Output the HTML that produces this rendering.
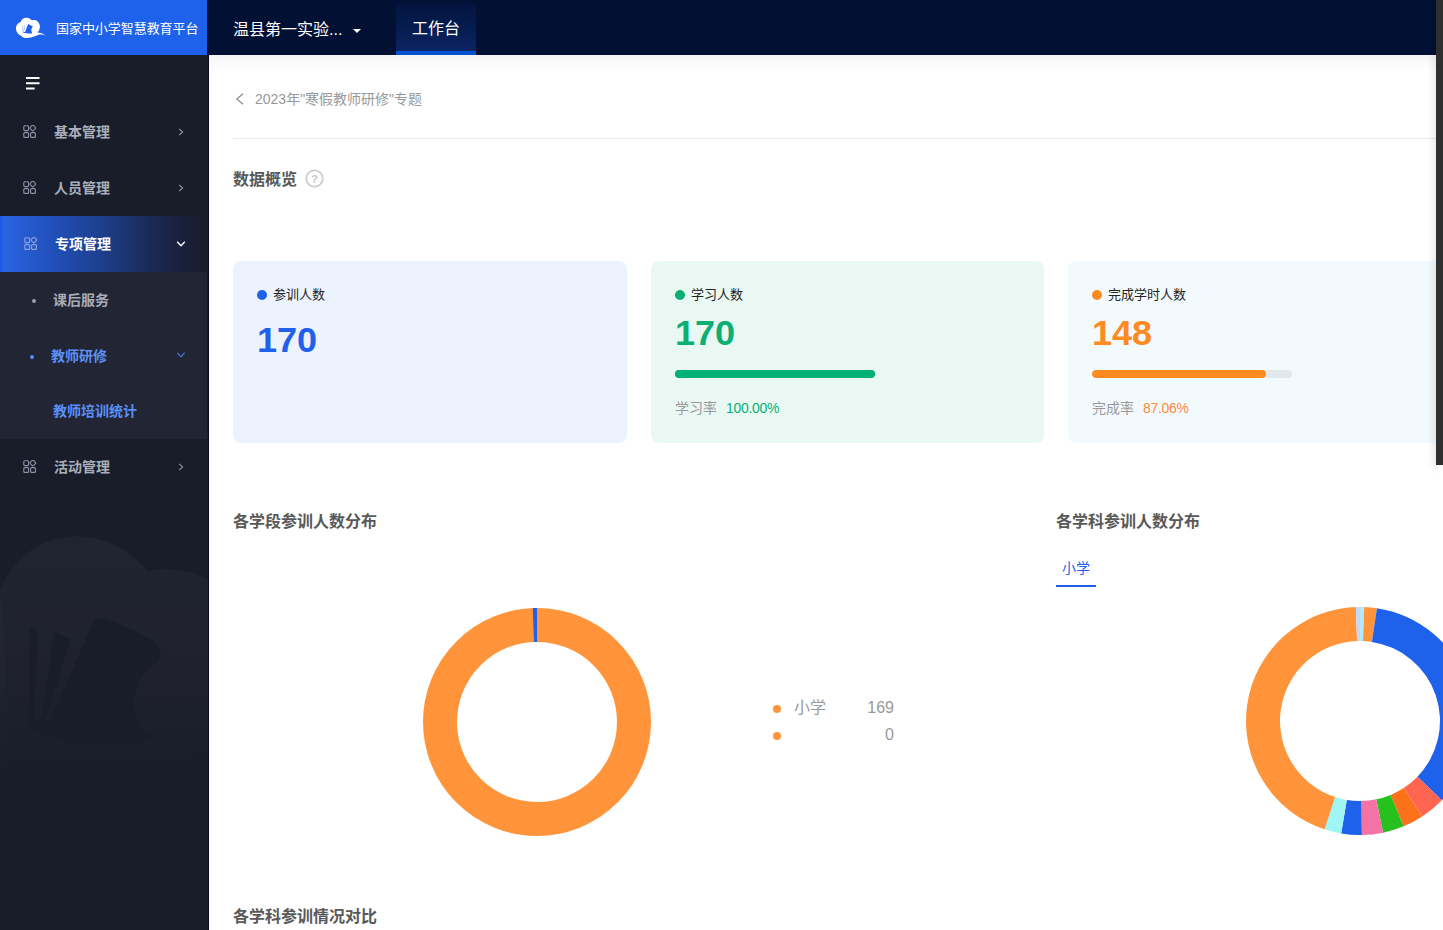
<!DOCTYPE html>
<html lang="zh-CN">
<head>
<meta charset="utf-8">
<title>教师培训统计</title>
<style>
*{box-sizing:border-box;margin:0;padding:0}
html,body{width:1443px;height:930px;overflow:hidden;background:#fff}
body{font-family:"Liberation Sans","Noto Sans CJK SC",sans-serif;color:#333;position:relative}
.abs{position:absolute}
/* header */
#hdr{position:absolute;left:0;top:0;width:1443px;height:55px;background:#021033}
#logo{position:absolute;left:0;top:0;width:207px;height:55px;background:#1e61eb}
#logo .t{position:absolute;left:56px;top:0;line-height:57px;font-size:13px;color:#fff;white-space:nowrap;letter-spacing:-0.05px}
#org{position:absolute;left:233px;top:2px;line-height:56px;font-size:16px;color:#fff;white-space:nowrap}
#caret{position:absolute;left:353px;top:29px;width:0;height:0;border-left:4px solid transparent;border-right:4px solid transparent;border-top:4.5px solid #fff}
#tab{position:absolute;left:396px;top:0;width:80px;height:55px;background:linear-gradient(180deg,#021033 0,#03143c 7%,#0a2463 100%);border-bottom:4px solid #0252cf;text-align:center;line-height:58px;font-size:16px;color:#fff}
/* sidebar */
#side{position:absolute;left:0;top:55px;width:209px;height:875px;background:#191c29;border-right:1px solid #070b1e;overflow:hidden}
.mi{position:absolute;left:0;width:208px;height:56px;line-height:56px;font-size:14px;font-weight:700;color:#a9afbb;white-space:nowrap}
.mi .tx{position:absolute;left:54px;top:0}
.mi svg.ic{position:absolute;left:23px;top:21px}
.mi svg.ch{position:absolute;left:176px;top:23px}
#sel{background:linear-gradient(90deg,#2b65e2 0%,#2252c0 22%,#1d3e8a 50%,#1a2a57 72%,#191f38 90%,#191c29 100%);color:#fff}
#sel:before{content:"";position:absolute;left:0;top:0;width:3px;height:100%;background:#1e5be6}
#sub{position:absolute;left:0;top:217px;width:207px;height:167px;background:#222533}
.si{position:absolute;left:0;width:207px;height:56px;line-height:56px;font-size:14px;font-weight:700;white-space:nowrap}
/* content */
#main{position:absolute;left:209px;top:55px;width:1234px;height:875px;background:#fff;overflow:hidden}
#topsh{position:absolute;left:0;top:0;width:100%;height:16px;background:linear-gradient(180deg,#f4f4f4 0%,#fafafa 45%,#fff 100%)}
.h2{position:absolute;font-size:16px;font-weight:700;color:#595959;white-space:nowrap;line-height:24px}
.card{position:absolute;top:206px;width:394px;height:182px;border-radius:8px}
.card .dot{position:absolute;left:24px;top:29px;width:10px;height:10px;border-radius:50%}
.card .lb{position:absolute;left:40px;top:24px;line-height:20px;font-size:13px;color:#222;white-space:nowrap}
.card .num{position:absolute;left:24px;font-size:34.500px;font-weight:700;line-height:40px;transform:scaleX(1.045);transform-origin:left center;white-space:nowrap}
.card .bar{position:absolute;left:24px;top:109px;width:200px;height:8px;border-radius:4px;background:#e2e9ee;overflow:hidden}
.card .bar i{display:block;height:8px;border-radius:4px}
.card .rt{position:absolute;left:24px;top:137px;line-height:20px;font-size:14px;color:#999;white-space:nowrap}
.card .rt b{font-weight:400;margin-left:9px;letter-spacing:-.3px}
</style>
</head>
<body>
<div id="hdr">
  <div id="logo">
    <svg class="abs" style="left:8px;top:8px" width="60" height="40" viewBox="0 0 1395 930">
      <path d="M185 490C180 410 225 350 292 328C310 262 372 222 435 228C480 232 525 252 556 290C600 270 660 285 700 325C745 370 755 440 730 500C718 535 700 555 680 568C760 570 830 600 882 645C820 615 760 610 700 628C620 655 530 695 430 700C380 702 340 685 312 650C255 630 192 570 185 490Z" fill="#fff"/>
      <path d="M466 372L580 432C545 470 525 520 562 586C490 596 400 588 328 556C350 562 375 562 398 556Z" fill="#1e61eb"/>
      <path d="M336 402L352 400L356 552L338 548Z" fill="#1e61eb" opacity=".4"/>
      <path d="M384 402L400 404L372 560L360 556Z" fill="#1e61eb" opacity=".45"/>
    </svg>
    <div class="t">国家中小学智慧教育平台</div>
  </div>
  <div id="org">温县第一实验...</div>
  <div id="caret"></div>
  <div id="tab">工作台</div>
</div>

<div id="side">
  <svg class="abs" style="left:25.500px;top:21.500px" width="14" height="13" viewBox="0 0 14 13"><path d="M0 1h13.500M0 6.300h13.500M0 11.600h8.700" stroke="#fff" stroke-width="2" fill="none"/></svg>
  <!-- watermark -->
  <svg class="abs" style="left:0;top:465px" width="210" height="280" viewBox="0 0 698 930">
    <defs><linearGradient id="wg" x1="0" y1="0" x2="0" y2="1"><stop offset="0.05" stop-color="#20242f"/><stop offset="0.5" stop-color="#1f222e"/><stop offset="0.95" stop-color="#191c29"/></linearGradient>
    <linearGradient id="wg2" x1="0" y1="0" x2="0" y2="1"><stop offset="0.25" stop-color="#222632"/><stop offset="0.9" stop-color="#1b1e2b"/></linearGradient></defs>
    <path d="M0 235C20 180 60 125 120 90C170 62 230 48 290 56C370 66 440 105 490 170C550 155 630 165 698 200V760C560 840 300 900 0 890Z" fill="url(#wg)"/>
    <path d="M0 240C12 330 18 430 20 540V810L0 805Z" fill="url(#wg2)"/>
    <path d="M318 322C385 340 450 365 500 395C535 415 545 450 520 475C470 510 440 560 446 620C450 665 475 705 520 722C440 750 330 755 230 735C175 722 125 708 95 690L100 355L125 366L112 680L140 655L180 372L235 395L150 668L165 670Z" fill="#191c29"/>
  </svg>
  <div class="mi" style="top:49px"><svg class="ic" width="14" height="14" viewBox="0 0 14 14" fill="none" stroke="#8f95a8" stroke-width="1.100"><rect x=".8" y=".8" width="4.800" height="4.800" rx="1"/><rect x=".8" y="7.600" width="4.800" height="4.800" rx="1"/><rect x="7.600" y="7.600" width="4.800" height="4.800" rx="1"/><rect x="7.600" y=".8" width="4.400" height="4.400" rx=".8" transform="rotate(45 9.800 3)"/></svg><span class="tx">基本管理</span><svg class="ch" width="10" height="10" viewBox="0 0 10 10"><path d="M3.200 1.800L6.600 5 3.200 8.200" stroke="#8f95a8" stroke-width="1.100" fill="none"/></svg></div>
  <div class="mi" style="top:105px"><svg class="ic" width="14" height="14" viewBox="0 0 14 14" fill="none" stroke="#8f95a8" stroke-width="1.100"><rect x=".8" y=".8" width="4.800" height="4.800" rx="1"/><rect x=".8" y="7.600" width="4.800" height="4.800" rx="1"/><rect x="7.600" y="7.600" width="4.800" height="4.800" rx="1"/><rect x="7.600" y=".8" width="4.400" height="4.400" rx=".8" transform="rotate(45 9.800 3)"/></svg><span class="tx">人员管理</span><svg class="ch" width="10" height="10" viewBox="0 0 10 10"><path d="M3.200 1.800L6.600 5 3.200 8.200" stroke="#8f95a8" stroke-width="1.100" fill="none"/></svg></div>
  <div class="mi" id="sel" style="top:161px"><svg class="ic" style="left:24px" width="14" height="14" viewBox="0 0 14 14" fill="none" stroke="#8fa6dd" stroke-width="1.100"><rect x=".8" y=".8" width="4.800" height="4.800" rx="1"/><rect x=".8" y="7.600" width="4.800" height="4.800" rx="1"/><rect x="7.600" y="7.600" width="4.800" height="4.800" rx="1"/><rect x="7.600" y=".8" width="4.400" height="4.400" rx=".8" transform="rotate(45 9.800 3)"/></svg><span class="tx" style="left:55px">专项管理</span><svg class="ch" width="10" height="10" viewBox="0 0 10 10"><path d="M1.200 2.800L5 6.800 8.800 2.800" stroke="#fff" stroke-width="1.300" fill="none"/></svg></div>
  <div id="sub">
    <div class="si" style="top:0;color:#a9adb7"><span class="abs" style="left:32px;top:27px;width:4px;height:4px;border-radius:50%;background:#9a9eb0"></span><span class="abs" style="left:53px">课后服务</span></div>
    <div class="si" style="top:56px;color:#5b8ff9"><span class="abs" style="left:30px;top:27px;width:4px;height:4px;border-radius:50%;background:#5b8ff9"></span><span class="abs" style="left:51px">教师研修</span><svg class="abs" style="left:176px;top:22px" width="10" height="10" viewBox="0 0 10 10"><path d="M1.400 2.800L5 6.800 8.600 2.800" stroke="#4a7de8" stroke-width="1.100" fill="none"/></svg></div>
    <div class="si" style="top:111px;color:#5b8ff9"><span class="abs" style="left:53px">教师培训统计</span></div>
  </div>
  <div class="mi" style="top:384px"><svg class="ic" width="14" height="14" viewBox="0 0 14 14" fill="none" stroke="#8f95a8" stroke-width="1.100"><rect x=".8" y=".8" width="4.800" height="4.800" rx="1"/><rect x=".8" y="7.600" width="4.800" height="4.800" rx="1"/><rect x="7.600" y="7.600" width="4.800" height="4.800" rx="1"/><rect x="7.600" y=".8" width="4.400" height="4.400" rx=".8" transform="rotate(45 9.800 3)"/></svg><span class="tx">活动管理</span><svg class="ch" width="10" height="10" viewBox="0 0 10 10"><path d="M3.200 1.800L6.600 5 3.200 8.200" stroke="#8f95a8" stroke-width="1.100" fill="none"/></svg></div>
</div>

<div id="main">
  <div id="topsh"></div>
  <!-- breadcrumb -->
  <svg class="abs" style="left:26px;top:38px" width="10" height="12" viewBox="0 0 10 12"><path d="M8 .8L1.800 6 8 11.200" stroke="#8a8a8a" stroke-width="1.200" fill="none"/></svg>
  <div class="abs" style="left:46px;top:34px;line-height:20px;font-size:14px;color:#999;white-space:nowrap">2023年"寒假教师研修"专题</div>
  <div class="abs" style="left:24px;top:83px;width:1210px;height:1px;background:#e9e9e9"></div>
  <div class="h2" style="left:24px;top:113px">数据概览</div>
  <svg class="abs" style="left:95.500px;top:113.500px" width="19" height="19" viewBox="0 0 19 19"><circle cx="9.500" cy="9.500" r="8.200" fill="none" stroke="#cdcdcd" stroke-width="1.800"/><text x="9.500" y="13.600" text-anchor="middle" font-family="Liberation Sans, sans-serif" font-size="11.500" font-weight="700" fill="#c9c9c9">?</text></svg>

  <!-- cards -->
  <div class="card" style="left:24px;background:#edf3fe">
    <span class="dot" style="background:#2160ea"></span><span class="lb">参训人数</span>
    <span class="num" style="top:59px;color:#2160ea">170</span>
  </div>
  <div class="card" style="left:442px;width:393px;background:#e9f8f3">
    <span class="dot" style="background:#0caf73"></span><span class="lb">学习人数</span>
    <span class="num" style="top:52px;color:#0caf73">170</span>
    <span class="bar" style="background:#00b173"><i style="width:200px;background:#00b173"></i></span>
    <span class="rt">学习率<b style="color:#0caf73">100.00%</b></span>
  </div>
  <div class="card" style="left:859px;background:#f3fafe">
    <span class="dot" style="background:#ff8a1f"></span><span class="lb">完成学时人数</span>
    <span class="num" style="top:52px;color:#ff8a1f">148</span>
    <span class="bar"><i style="width:174px;background:#ff8a1f"></i></span>
    <span class="rt">完成率<b style="color:#ff8a3a">87.06%</b></span>
  </div>

  <div class="h2" style="left:24px;top:455px">各学段参训人数分布</div>
  <div class="h2" style="left:847px;top:455px">各学科参训人数分布</div>
  <div class="abs" style="left:847px;top:502px;width:40px;height:30px;border-bottom:2px solid #1f5fe8;text-align:center;line-height:22px;font-size:14px;color:#1f5fe8">小学</div>

  <!-- donut 1 -->
  <svg class="abs" style="left:208px;top:547px" width="240" height="240" viewBox="-120 -120 240 240">
    <circle r="97" fill="none" stroke="#ff943a" stroke-width="34"/>
    <path d="M0 -114 L0 -80 A80 80 0 0 0 -2.960 -79.950 L-4.210 -113.920 A114 114 0 0 1 0 -114Z" fill="#1e61eb"/>
  </svg>
  <!-- legend -->
  <span class="abs" style="left:563.500px;top:649.500px;width:8px;height:8px;border-radius:50%;background:#ff943a"></span>
  <span class="abs" style="left:563.500px;top:676.500px;width:8px;height:8px;border-radius:50%;background:#ff943a"></span>
  <div class="abs" style="left:585px;top:641px;line-height:24px;font-size:16px;color:#999;white-space:nowrap">小学</div>
  <div class="abs" style="left:625px;top:641px;width:60px;text-align:right;line-height:24px;font-size:16px;color:#999">169</div>
  <div class="abs" style="left:625px;top:668px;width:60px;text-align:right;line-height:24px;font-size:16px;color:#999">0</div>

  <!-- donut 2 -->
  <svg id="d2" class="abs" style="left:1031px;top:546px" width="240" height="240" viewBox="-120 -120 240 240">
    <path d="M0.00 -114.00A114 114 0 0 1 4.22 -113.92L2.96 -79.95A80 80 0 0 0 0.00 -80.00Z" fill="#b5e8fa"/>
    <path d="M4.22 -113.92A114 114 0 0 1 16.95 -112.73L11.89 -79.11A80 80 0 0 0 2.96 -79.95Z" fill="#ff943a"/>
    <path d="M16.95 -112.73A114 114 0 0 1 81.87 79.33L57.45 55.67A80 80 0 0 0 11.89 -79.11Z" fill="#1e61eb"/>
    <path d="M81.87 79.33A114 114 0 0 1 62.26 95.50L43.69 67.02A80 80 0 0 0 57.45 55.67Z" fill="#ff6550"/>
    <path d="M62.26 95.50A114 114 0 0 1 43.63 105.32L30.61 73.91A80 80 0 0 0 43.69 67.02Z" fill="#fd711b"/>
    <path d="M43.63 105.32A114 114 0 0 1 23.12 111.63L16.22 78.34A80 80 0 0 0 30.61 73.91Z" fill="#26c11f"/>
    <path d="M23.12 111.63A114 114 0 0 1 1.89 113.98L1.33 79.99A80 80 0 0 0 16.22 78.34Z" fill="#f572a6"/>
    <path d="M1.89 113.98A114 114 0 0 1 -18.82 112.44L-13.20 78.90A80 80 0 0 0 1.33 79.99Z" fill="#1e61eb"/>
    <path d="M-18.82 112.44A114 114 0 0 1 -35.42 108.36L-24.85 76.04A80 80 0 0 0 -13.20 78.90Z" fill="#a0f5f5"/>
    <path d="M-35.42 108.36A114 114 0 0 1 -4.18 -113.92L-2.93 -79.95A80 80 0 0 0 -24.85 76.04Z" fill="#ff943a"/>
    <path d="M-4.18 -113.92A114 114 0 0 1 -0.00 -114.00L-0.00 -80.00A80 80 0 0 0 -2.93 -79.95Z" fill="#c5d8fb"/>
  </svg>

  <div class="h2" style="left:24px;top:850px">各学科参训情况对比</div>
</div>

<!-- right dark strip -->
<div class="abs" style="left:1436px;top:0;width:7px;height:465px;background:#2f2f2f;box-shadow:-2px 2px 9px rgba(0,0,0,.12)"></div>
</body>
</html>
